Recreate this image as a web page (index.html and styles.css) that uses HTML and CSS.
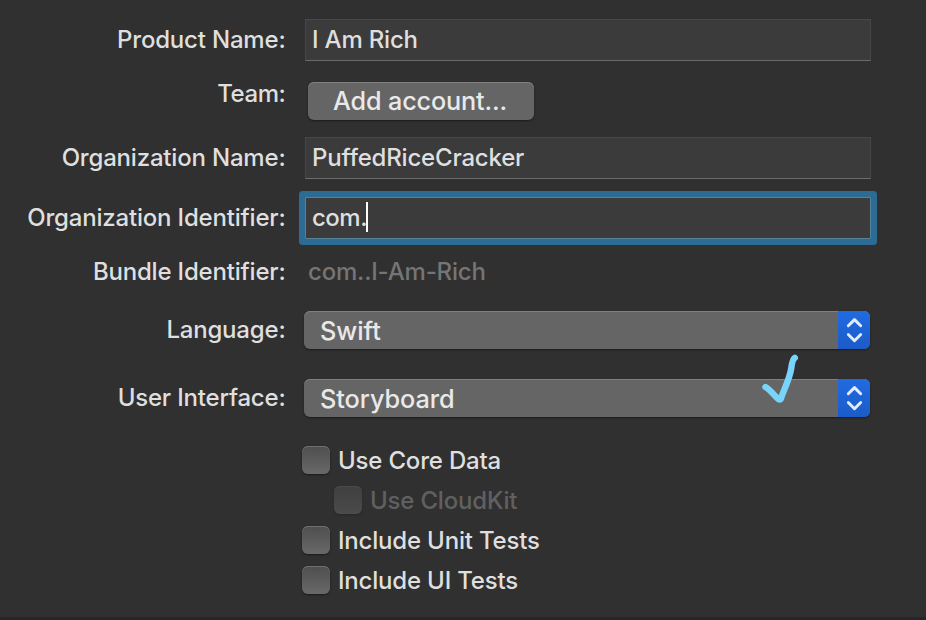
FILE: index.html
```html
<!DOCTYPE html>
<html lang="en">
<head>
<meta charset="utf-8">
<title>New Project Options</title>
<link rel="stylesheet" href="styles.css">
</head>
<body>
<main class="sheet">
  <div class="row row-field"><span class="label">Product Name:</span><div class="field"><span>I Am Rich</span></div></div>
  <div class="row row-team"><span class="label">Team:</span><button class="button">Add account...</button></div>
  <div class="row row-field"><span class="label">Organization Name:</span><div class="field"><span>PuffedRiceCracker</span></div></div>
  <div class="row row-focus"><span class="label">Organization Identifier:</span><div class="field focused"><span>com.</span><i class="caret"></i></div></div>
  <div class="row row-bundle"><span class="label">Bundle Identifier:</span><span class="static">com..I-Am-Rich</span></div>
  <div class="row row-popup"><span class="label">Language:</span>
    <div class="popup"><span class="value">Swift</span><span class="stepper"><svg width="32" height="38" viewBox="0 0 32 38"><path d="M10.3 14.8 16.5 8.6l6.200 6.200M10.3 23.5l6.200 6.200 6.200-6.200"/></svg></span></div>
  </div>
  <div class="row row-popup"><span class="label">User Interface:</span>
    <div class="popup"><span class="value">Storyboard</span><span class="stepper"><svg width="32" height="38" viewBox="0 0 32 38"><path d="M10.3 14.8 16.5 8.6l6.200 6.200M10.3 23.5l6.200 6.200 6.200-6.200"/></svg></span>
      <svg class="tick" width="40" height="52" viewBox="0 0 40 52"><path d="M5.500 33C10 35.500 13 40 18 44.800C19 46 20.500 45.800 21 44.500C23.500 36 29.500 26 31.300 14C32 9 32.300 5.500 34.800 3.800"/></svg>
    </div>
  </div>
  <div class="checks">
    <div class="check"><i class="box"></i><span class="check-text">Use Core Data</span></div>
    <div class="check disabled"><i class="box"></i><span class="check-text">Use CloudKit</span></div>
    <div class="check"><i class="box"></i><span class="check-text">Include Unit Tests</span></div>
    <div class="check"><i class="box"></i><span class="check-text">Include UI Tests</span></div>
  </div>
</main>
</body>
</html>
```
FILE: styles.css
```css
* { box-sizing: border-box; }
body {
  margin: 0;
  background: #303030;
  color: #dfdfdf;
  font: 450 24px/30px Inter, "Liberation Sans", sans-serif;
  letter-spacing: -0.19px;
}
.sheet {
  display: flex;
  flex-direction: column;
  width: 926px;
  height: 620px;
  padding-top: 19px;
  border-bottom: 3px solid #272526;
  overflow: hidden;
  white-space: nowrap;
}
.row { display: flex; align-items: center; flex: none; }
.label { width: 285.5px; text-align: right; margin-right: 18.5px; flex: none; }
.row-field { height: 42px; }
.row-team { height: 38px; margin: 21px 0 17px; }
.row-team .label { padding-bottom: 14px; letter-spacing: -0.4px; }
.row-focus { height: 42px; margin-top: 18px; }
.row-bundle { height: 30px; margin-top: 18px; }
.row-popup { height: 38px; margin-top: 24px; }
.row-popup + .row-popup { margin-top: 30px; }
.field {
  display: flex;
  align-items: center;
  width: 566px;
  height: 42px;
  margin-left: 1px;
  padding-left: 6px;
  background: #3b3b3b;
  border: 1px solid #484848;
  border-bottom: 1px solid #6b6b6b;
}
.focused { border-color: #568197; box-shadow: 0 0 0 6px #2c6b94; border-radius: 1px; }
.focused span { letter-spacing: -0.5px; }
.caret { width: 2px; height: 30px; margin: -2px 0 0 -0.5px; background: #fff; }
.button {
  width: 226px;
  height: 38px;
  margin: 0 0 0 4px;
  padding: 0 2px 0 0;
  border: 0;
  border-radius: 6px;
  background: #656565;
  box-shadow: inset 0 1px #818181, 0 1px 2px #1b1b1b;
  color: #e9e9e9;
  font: 450 25.2px/36px Inter, "Liberation Sans", sans-serif;
  letter-spacing: -0.14px;
}
.static { color: #757575; margin-left: 4px; }
.popup {
  position: relative;
  display: flex;
  width: 566px;
  height: 38px;
  border-radius: 6px;
  background: #656565;
  box-shadow: inset 0 1px #818181, 0 1px 2px #1b1b1b;
  color: #e9e9e9;
  font-size: 25.3px;
  line-height: 40px;
  letter-spacing: -0.06px;
}
.value { flex: 1; padding-left: 16px; }
.stepper {
  width: 32px;
  height: 38px;
  border-radius: 0 6px 6px 0;
  background: linear-gradient(#216be0, #1b5bc9);
}
.stepper svg { display: block; fill: none; stroke: #e3ecfa; stroke-width: 2.9; stroke-linecap: round; stroke-linejoin: round; }
.tick {
  position: absolute;
  left: 456px;
  top: -25px;
  fill: none;
  stroke: #79d4fb;
  stroke-width: 6.4;
  stroke-linecap: round;
  stroke-linejoin: round;
}
.checks { display: flex; flex-direction: column; gap: 12px; margin: 29px 0 0 302px; }
.check { display: flex; align-items: center; gap: 8px; height: 28px; }
.check-text { padding-top: 2px; }
.box {
  width: 28px;
  height: 28px;
  border-radius: 6px;
  background: linear-gradient(#4e4e4e, #696969);
  box-shadow: inset 0 1px #707070, 0 1px 2px #1c1c1c;
}
.disabled { margin-left: 32px; color: #606060; }
.disabled .box { background: linear-gradient(#3f3f3f, #4b4b4b); box-shadow: inset 0 1px #4c4c4c, 0 1px 2px #272727; }
```
